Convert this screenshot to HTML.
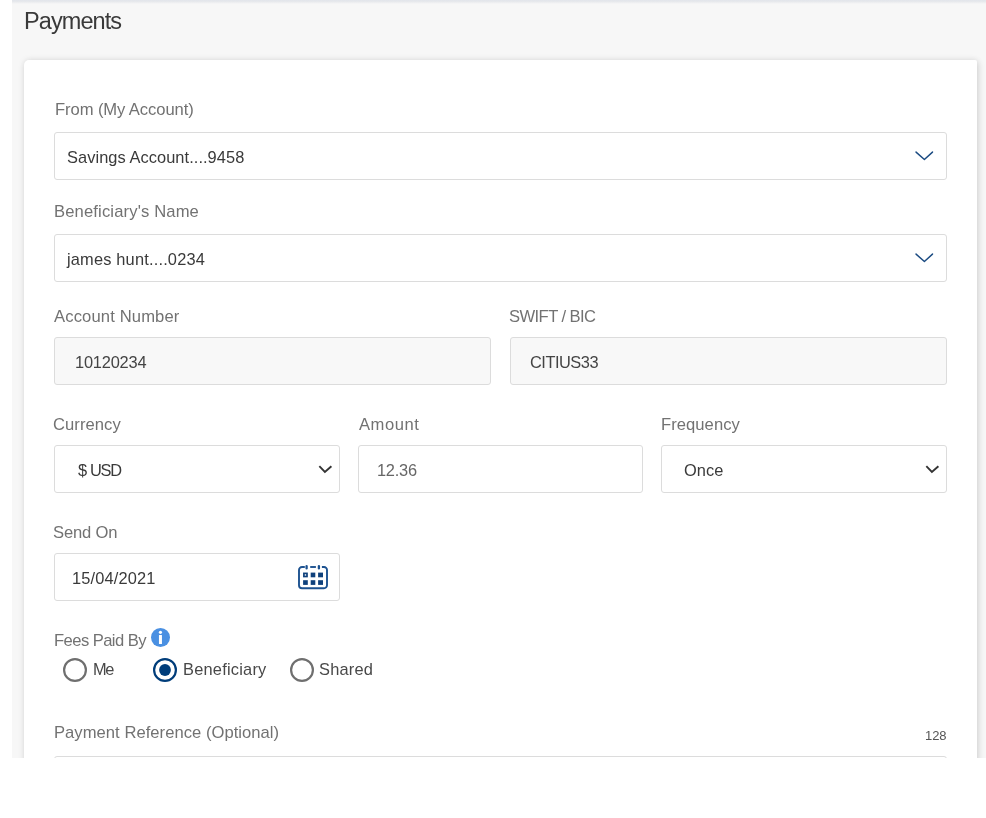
<!DOCTYPE html>
<html>
<head>
<meta charset="utf-8">
<style>
html,body{margin:0;padding:0;width:986px;height:818px;overflow:hidden;background:#fff;}
body{position:relative;font-family:"Liberation Sans",sans-serif;}
.bg{position:absolute;left:12px;top:0;width:974px;height:758px;background:#f7f7f7;overflow:hidden;}
.topsh{position:absolute;left:0;top:0;width:974px;height:4px;background:linear-gradient(#e2e5eb 0%,#e6e8ec 35%,#f7f7f7 100%);}
.card{position:absolute;left:12px;top:60px;width:953px;height:760px;background:#fff;border-radius:5px 2px 0 0;box-shadow:0 0 6px rgba(0,0,0,.1),2px 2px 7px rgba(0,0,0,.09);}
.t{position:absolute;white-space:nowrap;line-height:1;will-change:transform;}
.bl{display:inline-block;width:0;height:0;}
.box{position:absolute;box-sizing:border-box;border:1px solid #dcdcdc;border-radius:3px;background:#fff;}
.ro{background:#f8f8f8;}
svg{position:absolute;}
</style>
</head>
<body>
<div class="bg">
  <div class="topsh"></div>
  <div class="card"></div>
</div>

<div class="box" style="left:54px;top:132px;width:893px;height:48px;"></div>
<svg style="left:912px;top:148px" width="24" height="16" viewBox="0 0 24 16"><path d="M4.05 4.1 L12.4 11.5 L20.5 4.1" fill="none" stroke="#1b4b82" stroke-width="1.45" stroke-linecap="round" stroke-linejoin="round"/></svg>

<div class="box" style="left:54px;top:234px;width:893px;height:48px;"></div>
<svg style="left:912px;top:250px" width="24" height="16" viewBox="0 0 24 16"><path d="M4.05 4.1 L12.4 11.5 L20.5 4.1" fill="none" stroke="#1b4b82" stroke-width="1.45" stroke-linecap="round" stroke-linejoin="round"/></svg>

<div class="box ro" style="left:54px;top:337px;width:437px;height:48px;"></div>
<div class="box ro" style="left:510px;top:337px;width:437px;height:48px;"></div>

<div class="box" style="left:54px;top:445px;width:286px;height:48px;"></div>
<svg style="left:316px;top:462px" width="18" height="14" viewBox="0 0 18 14"><path d="M4.0 4.9 L8.9 10.0 L14.7 4.9" fill="none" stroke="#333" stroke-width="1.9" stroke-linecap="square"/></svg>
<div class="box" style="left:358px;top:445px;width:285px;height:48px;"></div>
<div class="box" style="left:661px;top:445px;width:286px;height:48px;"></div>
<svg style="left:923px;top:462px" width="18" height="14" viewBox="0 0 18 14"><path d="M4.0 4.9 L8.9 10.0 L14.7 4.9" fill="none" stroke="#333" stroke-width="1.9" stroke-linecap="square"/></svg>

<div class="box" style="left:54px;top:553px;width:286px;height:48px;"></div>
<svg style="left:296px;top:563px" width="34" height="28" viewBox="0 0 34 28">
  <path d="M8.8 4 H6 A3 3 0 0 0 3 7 V22.3 A3 3 0 0 0 6 25.3 H28 A3 3 0 0 0 31 22.3 V7 A3 3 0 0 0 28 4 H25.9" fill="none" stroke="#1d5290" stroke-width="1.9"/>
  <path d="M14.2 4 H19.9" fill="none" stroke="#1d5290" stroke-width="1.9"/>
  <path d="M10.6 3.1 V5.4 M22.9 3.1 V5.4" fill="none" stroke="#1d5290" stroke-width="2.3" stroke-linecap="round"/>
  <rect x="7.9" y="10.4" width="3.1" height="3.1" fill="none" stroke="#0f417c" stroke-width="1.7"/>
  <rect x="14.7" y="9.6" width="4.6" height="4.7" fill="#0f417c"/>
  <rect x="22.1" y="9.6" width="4.9" height="4.7" fill="#0f417c"/>
  <rect x="7.1" y="17.2" width="4.7" height="4.7" fill="#0f417c"/>
  <rect x="14.7" y="17.2" width="4.6" height="4.7" fill="#0f417c"/>
  <rect x="22.1" y="17.2" width="4.9" height="4.7" fill="#0f417c"/>
</svg>

<svg style="left:151px;top:628px" width="19" height="19" viewBox="0 0 19 19"><circle cx="9.5" cy="9.5" r="9.5" fill="#4a90e2"/><circle cx="9.45" cy="4.3" r="1.6" fill="#fff"/><rect x="7.95" y="7" width="3" height="9" rx="0.3" fill="#fff"/></svg>

<svg style="left:63px;top:658px" width="24" height="24" viewBox="0 0 24 24"><circle cx="12" cy="12" r="10.9" fill="none" stroke="#6f6f6f" stroke-width="2.2"/></svg>
<svg style="left:153px;top:658px" width="24" height="24" viewBox="0 0 24 24"><circle cx="12" cy="12" r="10.9" fill="none" stroke="#003d7a" stroke-width="2.2"/><circle cx="12" cy="12" r="5.9" fill="#003d7a"/></svg>
<svg style="left:290px;top:658px" width="24" height="24" viewBox="0 0 24 24"><circle cx="12" cy="12" r="10.9" fill="none" stroke="#6f6f6f" stroke-width="2.2"/></svg>

<div class="box" style="left:54px;top:756px;width:893px;height:48px;"></div>
<div style="position:absolute;left:0;top:758px;width:986px;height:60px;background:#fff;"></div>

<div class="t" id="t_Payments" style="left:24.40px;top:9.82px;font-size:23.5px;color:#3a3a3a;letter-spacing:-0.914px">Payments<span class="bl"></span></div>
<div class="t" id="t_From" style="left:54.50px;top:101.82px;font-size:16.6px;color:#727272;letter-spacing:-0.088px">From (My Account)<span class="bl"></span></div>
<div class="t" id="t_Savings" style="left:67.00px;top:148.82px;font-size:16.4px;color:#3a3a3a;letter-spacing:0.064px">Savings Account....9458<span class="bl"></span></div>
<div class="t" id="t_Benef" style="left:54.00px;top:204.30px;font-size:16.6px;color:#727272;letter-spacing:0.141px">Beneficiary's Name<span class="bl"></span></div>
<div class="t" id="t_james" style="left:67.40px;top:251.32px;font-size:16.4px;color:#3a3a3a;letter-spacing:0.176px">james hunt....0234<span class="bl"></span></div>
<div class="t" id="t_AccNum" style="left:54.10px;top:308.91px;font-size:16.6px;color:#727272;letter-spacing:0.138px">Account Number<span class="bl"></span></div>
<div class="t" id="t_1012" style="left:74.80px;top:353.82px;font-size:16.4px;color:#444;letter-spacing:-0.200px">10120234<span class="bl"></span></div>
<div class="t" id="t_SWIFT" style="left:509.20px;top:309.11px;font-size:16.6px;color:#727272;letter-spacing:-0.580px">SWIFT / BIC<span class="bl"></span></div>
<div class="t" id="t_CITIUS" style="left:530.40px;top:353.71px;font-size:16.4px;color:#444;letter-spacing:-0.486px">CITIUS33<span class="bl"></span></div>
<div class="t" id="t_Currency" style="left:53.10px;top:416.80px;font-size:16.6px;color:#727272;letter-spacing:0.057px">Currency<span class="bl"></span></div>
<div class="t" id="t_dollar" style="left:77.70px;top:461.71px;font-size:16.4px;color:#3a3a3a;letter-spacing:0.000px">$<span class="bl"></span></div>
<div class="t" id="t_USD" style="left:90.00px;top:461.71px;font-size:16.4px;color:#3a3a3a;letter-spacing:-1.250px">USD<span class="bl"></span></div>
<div class="t" id="t_Amount" style="left:358.80px;top:416.80px;font-size:16.6px;color:#727272;letter-spacing:0.520px">Amount<span class="bl"></span></div>
<div class="t" id="t_12.36" style="left:377.30px;top:461.91px;font-size:16.4px;color:#666;letter-spacing:-0.250px">12.36<span class="bl"></span></div>
<div class="t" id="t_Freq" style="left:661.10px;top:416.80px;font-size:16.6px;color:#727272;letter-spacing:0.050px">Frequency<span class="bl"></span></div>
<div class="t" id="t_Once" style="left:683.70px;top:461.60px;font-size:16.4px;color:#3a3a3a;letter-spacing:0.067px">Once<span class="bl"></span></div>
<div class="t" id="t_SendOn" style="left:53.20px;top:524.70px;font-size:16.6px;color:#727272;letter-spacing:-0.167px">Send On<span class="bl"></span></div>
<div class="t" id="t_date" style="left:72.10px;top:570.01px;font-size:16.4px;color:#3a3a3a;letter-spacing:0.156px">15/04/2021<span class="bl"></span></div>
<div class="t" id="t_Fees" style="left:54.10px;top:632.91px;font-size:16.6px;color:#727272;letter-spacing:-0.564px">Fees Paid By<span class="bl"></span></div>
<div class="t" id="t_Me" style="left:92.60px;top:660.82px;font-size:16.4px;color:#484848;letter-spacing:-1.400px">Me<span class="bl"></span></div>
<div class="t" id="t_Benef2" style="left:182.60px;top:660.82px;font-size:16.4px;color:#484848;letter-spacing:0.220px">Beneficiary<span class="bl"></span></div>
<div class="t" id="t_Shared" style="left:319.00px;top:660.82px;font-size:16.4px;color:#484848;letter-spacing:0.200px">Shared<span class="bl"></span></div>
<div class="t" id="t_PayRef" style="left:54.00px;top:725.01px;font-size:16.6px;color:#727272;letter-spacing:0.037px">Payment Reference (Optional)<span class="bl"></span></div>
<div class="t" id="t_128" style="left:925.40px;top:729.01px;font-size:13px;color:#555;letter-spacing:-0.100px">128<span class="bl"></span></div>
</body>
</html>
